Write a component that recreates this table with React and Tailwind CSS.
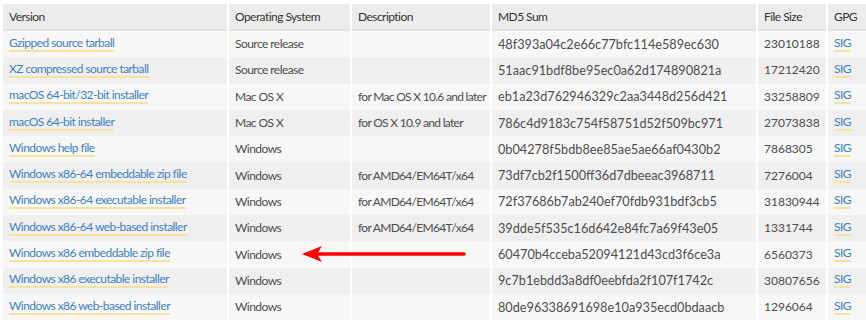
import React from "react";

const rows = [
  ["Gzipped source tarball", "Source release", "", "48f393a04c2e66c77bfc114e589ec630", "23010188"],
  ["XZ compressed source tarball", "Source release", "", "51aac91bdf8be95ec0a62d174890821a", "17212420"],
  ["macOS 64-bit/32-bit installer", "Mac OS X", "for Mac OS X 10.6 and later", "eb1a23d762946329c2aa3448d256d421", "33258809"],
  ["macOS 64-bit installer", "Mac OS X", "for OS X 10.9 and later", "786c4d9183c754f58751d52f509bc971", "27073838"],
  ["Windows help file", "Windows", "", "0b04278f5bdb8ee85ae5ae66af0430b2", "7868305"],
  ["Windows x86-64 embeddable zip file", "Windows", "for AMD64/EM64T/x64", "73df7cb2f1500ff36d7dbeeac3968711", "7276004"],
  ["Windows x86-64 executable installer", "Windows", "for AMD64/EM64T/x64", "72f37686b7ab240ef70fdb931bdf3cb5", "31830944"],
  ["Windows x86-64 web-based installer", "Windows", "for AMD64/EM64T/x64", "39dde5f535c16d642e84fc7a69f43e05", "1331744"],
  ["Windows x86 embeddable zip file", "Windows", "", "60470b4cceba52094121d43cd3f6ce3a", "6560373"],
  ["Windows x86 executable installer", "Windows", "", "9c7b1ebdd3a8df0eebfda2f107f1742c", "30807656"],
  ["Windows x86 web-based installer", "Windows", "", "80de96338691698e10a935ecd0bdaacb", "1296064"],
];

function Link({ children }) {
  return (
    <a className="text-[#3f7fbf] border-b-2 border-[#f7e3a1] pb-[1px] leading-none">
      {children}
    </a>
  );
}

function Cell({ className = "", children }) {
  return (
    <td className="p-0 border-r-2 border-white whitespace-nowrap">
      <div className={`h-[26.3px] px-[6px] flex items-center ${className}`}>{children}</div>
    </td>
  );
}

export default function App() {
  const txt = "text-[12px] tracking-[-0.55px]";
  const headers = ["Version", "Operating System", "Description", "MD5 Sum", "File Size", "GPG"];
  return (
    <div
      className="relative w-[866px] h-[322px] bg-white overflow-hidden pt-[4px] pl-[3px]"
      style={{ fontFamily: 'Lato, "Liberation Sans", sans-serif' }}
    >
      <table className="table-fixed border-collapse w-[880px] text-[#4d4d4d]">
        <colgroup>
          <col className="w-[225px]" />
          <col className="w-[123px]" />
          <col className="w-[140px]" />
          <col className="w-[266px]" />
          <col className="w-[70px]" />
          <col className="w-[56px]" />
        </colgroup>
        <thead>
          <tr className="bg-[#ececec] border-b-2 border-[#e2e2e2] text-left text-[#333]">
            {headers.map((h) => (
              <th key={h} className="p-0 font-normal border-r-2 border-white whitespace-nowrap">
                <div className={`h-[25px] pt-[1px] px-[6px] flex items-center ${txt}`}>{h}</div>
              </th>
            ))}
          </tr>
        </thead>
        <tbody>
          {rows.map((r, i) => (
            <tr key={i} className={i % 2 === 0 ? "bg-[#f7f7f7]" : "bg-[#efefef]"}>
              <Cell className={txt}><Link>{r[0]}</Link></Cell>
              <Cell className={txt}>{r[1]}</Cell>
              <Cell className="text-[12px] tracking-[-0.7px]">{r[2]}</Cell>
              <Cell className="text-[12.7px]">{r[3]}</Cell>
              <Cell className="text-[12px]">{r[4]}</Cell>
              <Cell className={txt}><Link>SIG</Link></Cell>
            </tr>
          ))}
        </tbody>
      </table>

      {/* red annotation arrow */}
      <svg className="absolute left-[300px] top-[244px]" width="170" height="20" viewBox="0 0 170 20">
        <line x1="14" y1="10" x2="164" y2="10" stroke="#f00" strokeWidth="3.5" strokeLinecap="round" />
        <path d="M2 10 L22 2 L17 10 L22 18 Z" fill="#f00" />
      </svg>
    </div>
  );
}
